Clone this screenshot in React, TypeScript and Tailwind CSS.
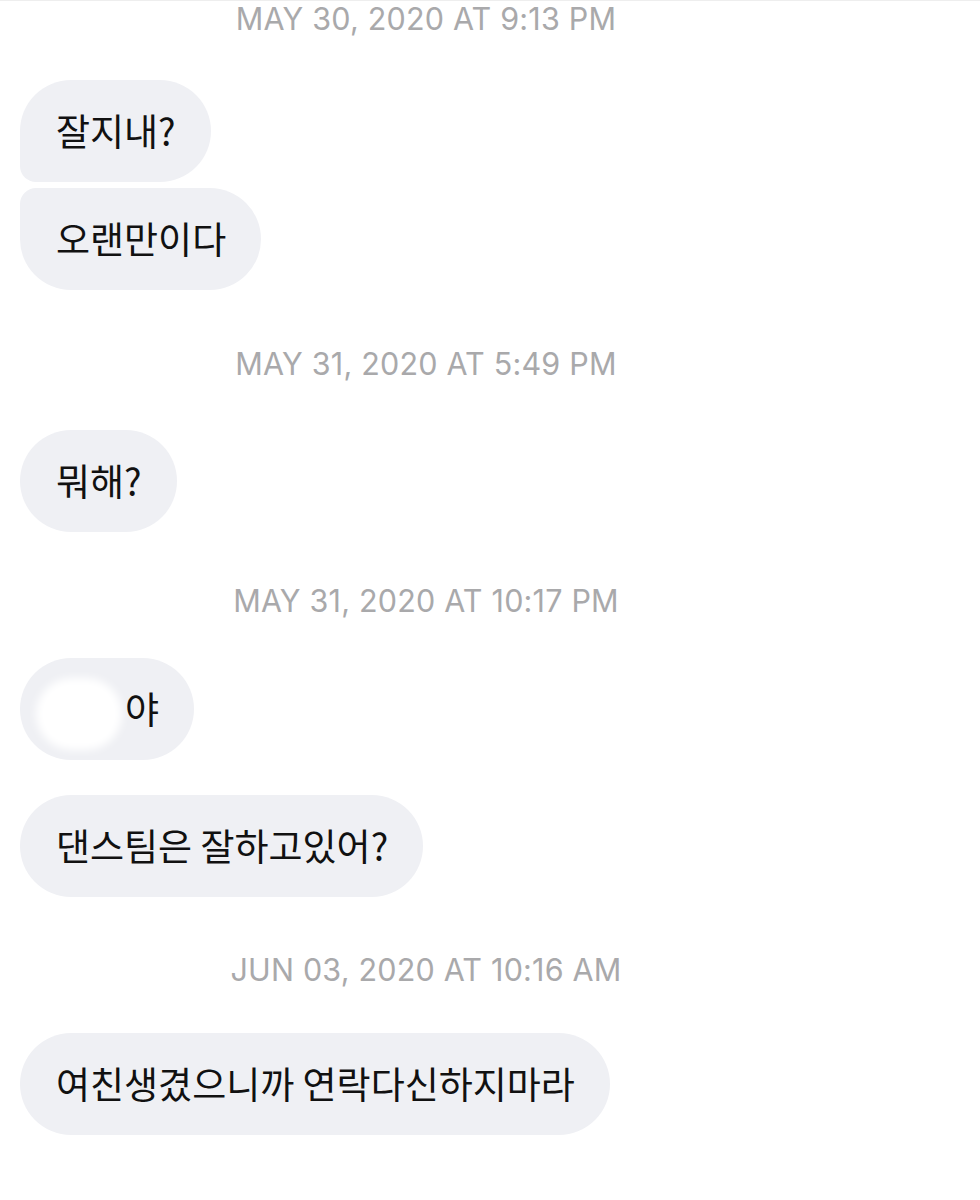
import React from 'react';

const ko = { fontFamily: '"Noto Sans CJK KR", "Noto Sans", sans-serif' };

const Stamp: React.FC<{ children: React.ReactNode; className?: string }> = ({ children, className = '' }) => (
  <div
    className={`w-[812px] h-[30px] text-center text-[30.5px] leading-[30px] tracking-[0.2px] text-[#a9a9ab] ${className}`}
    style={{ fontFamily: 'Inter, "Liberation Sans", sans-serif' }}
  >
    {children}
  </div>
);

const Bubble: React.FC<{ children: React.ReactNode; className?: string }> = ({ children, className = '' }) => (
  <div
    className={`self-start h-[102px] flex items-center pl-[36px] pr-[35px] bg-[#eff0f4] text-[#111] text-[37px] ${className}`}
    style={ko}
  >
    {children}
  </div>
);

export default function App() {
  return (
    <div className="w-[980px] h-[1200px] bg-white overflow-hidden border-t border-[#eeeeee]">
      <div className="flex flex-col pl-[20px]">
        <Stamp className="mt-[3px]">MAY 30, 2020 AT 9:13 PM</Stamp>

        {/* first group */}
        <Bubble className="mt-[46px] rounded-[51px] rounded-bl-[16px]">잘지내?</Bubble>
        <Bubble className="mt-[6px] rounded-[51px] rounded-tl-[16px]">오랜만이다</Bubble>

        <Stamp className="mt-[59px]">MAY 31, 2020 AT 5:49 PM</Stamp>
        <Bubble className="mt-[51px] rounded-[51px]">뭐해?</Bubble>

        <Stamp className="mt-[54px]">MAY 31, 2020 AT 10:17 PM</Stamp>
        <Bubble className="mt-[42px] rounded-[51px] relative pr-[30px]">
          {/* blurred-out name */}
          <span className="w-[69px] h-[30px]" />
          <span className="absolute left-[16px] top-[20px] w-[86px] h-[72px] rounded-[40px] bg-white blur-[4px]" />
          <span className="relative">야</span>
        </Bubble>
        <Bubble className="mt-[35px] rounded-[51px]">댄스팀은 잘하고있어?</Bubble>

        <Stamp className="mt-[58px]">JUN 03, 2020 AT 10:16 AM</Stamp>
        <Bubble className="mt-[48px] rounded-[51px]">여친생겼으니까 연락다신하지마라</Bubble>
      </div>
    </div>
  );
}
